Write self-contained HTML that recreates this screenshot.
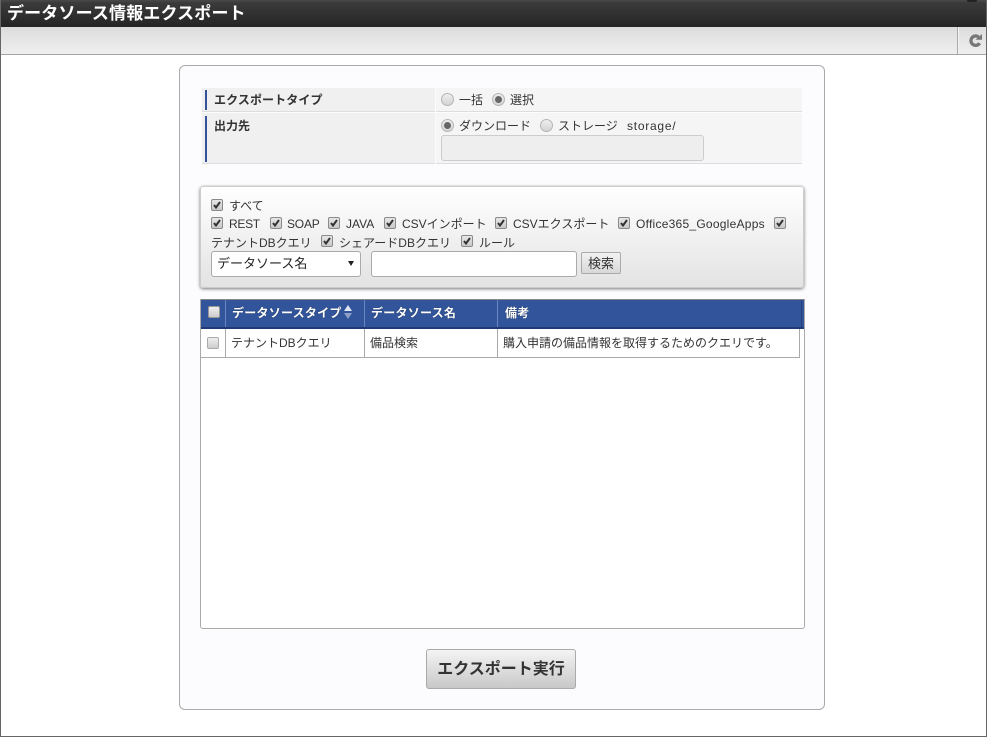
<!DOCTYPE html>
<html lang="ja"><head><meta charset="utf-8"><title>データソース情報エクスポート</title>
<style>
html,body{margin:0;padding:0;background:#fff}
body{width:987px;height:737px;position:relative;overflow:hidden;font-family:"Liberation Sans","Noto Sans CJK JP",sans-serif;font-size:13px;color:#333}
.a{position:absolute;box-sizing:border-box}
.t{position:absolute;white-space:nowrap;line-height:18px;height:18px}
.cb{position:absolute;width:12px;height:12px;box-sizing:border-box;border:1px solid #8a8a8a;border-radius:2px;background:linear-gradient(#e6e6e6,#c8c8c8)}
.cb svg{position:absolute;left:0;top:0}
.r{position:absolute;width:13px;height:13px;box-sizing:border-box;border:1px solid #b5b5b5;border-radius:50%;background:linear-gradient(#eee,#d4d4d4)}
.r.on:after{content:"";position:absolute;left:2px;top:2px;width:7px;height:7px;border-radius:50%;background:#666}
.th{color:#fff;font-weight:bold;text-shadow:0 0 1px #123;letter-spacing:.25px}
</style></head><body>
<div class="a" style="left:0;top:0;width:987px;height:27px;background:linear-gradient(#4a4a4a 0,#3a3a3a 3px,#252525 100%)"></div>
<div class="a" style="left:967px;top:0;width:10px;height:2px;background:#222;border-radius:0 0 5px 5px"></div>
<div class="t" style="left:7px;top:4px;font-size:17px;line-height:20px;height:20px;font-weight:bold;color:#fff;letter-spacing:.15px">データソース情報エクスポート</div>
<div class="a" style="left:0;top:27px;width:987px;height:28px;background:linear-gradient(#dcdcdc,#efefef);border-bottom:1px solid #a5a5a5"></div>
<div class="a" style="left:957px;top:27px;width:2px;height:27px;background:#aaa;border-right:1px solid #f4f4f4"></div>
<svg class="a" style="left:969px;top:34px" width="13" height="13" viewBox="0 0 13 13"><path d="M10.6 9.2A4.7 4.7 0 1 1 9.6 3" fill="none" stroke="#777" stroke-width="3.3"/><path d="M6.5 5.8H13V0z" fill="#777"/></svg>
<div class="a" style="left:0;top:0;width:987px;height:737px;border:1px solid #666;border-top:0;pointer-events:none"></div>

<div class="a" style="left:179px;top:65px;width:646px;height:645px;background:#fcfcfe;border:1px solid #aaa;border-radius:6px"></div>

<div class="a" style="left:202px;top:88px;width:233px;height:24px;background:#f0f0f0;border-bottom:1px solid #ddd"></div>
<div class="a" style="left:205px;top:90px;width:2px;height:20px;background:#34539a"></div>
<div class="a" style="left:436px;top:88px;width:366px;height:24px;background:#f5f5f5;border-bottom:1px solid #ddd"></div>
<div class="t" style="left:214px;top:91px;font-size:12px;font-weight:bold;letter-spacing:.1px">エクスポートタイプ</div>
<div class="r" style="left:441px;top:93px"></div><div class="t" style="left:459px;top:91px;font-size:12px">一括</div>
<div class="r on" style="left:492px;top:93px"></div><div class="t" style="left:510px;top:91px;font-size:12px">選択</div>

<div class="a" style="left:202px;top:113px;width:233px;height:51px;background:#f0f0f0;border-bottom:1px solid #ddd"></div>
<div class="a" style="left:205px;top:116px;width:2px;height:46px;background:#34539a"></div>
<div class="a" style="left:436px;top:113px;width:366px;height:51px;background:#f5f5f5;border-bottom:1px solid #ddd"></div>
<div class="t" style="left:214px;top:117px;font-size:12px;font-weight:bold">出力先</div>
<div class="r on" style="left:441px;top:119px"></div><div class="t" style="left:459px;top:117px;font-size:12px">ダウンロード</div>
<div class="r" style="left:540px;top:119px"></div><div class="t" style="left:558px;top:117px;font-size:12px">ストレージ</div>
<div class="t" style="left:627px;top:117px;font-size:12px;letter-spacing:.75px">storage/</div>
<div class="a" style="left:441px;top:135px;width:263px;height:26px;background:#eee;border:1px solid #ccc;border-radius:3px"></div>

<div class="a" style="left:200px;top:186px;width:604px;height:102px;background:linear-gradient(#fff,#e3e3e3);border:1px solid #ccc;border-radius:3px;box-shadow:0 1px 3px #777"></div>
<div class="cb" style="left:211px;top:199px"><svg width="10" height="10" viewBox="0 0 10 10"><path d="M2 5l2 2.5L8 2" fill="none" stroke="#333" stroke-width="2"/></svg></div><div class="t" style="left:229px;top:197px;font-size:12px">すべて</div>
<div class="cb" style="left:211px;top:217px"><svg width="10" height="10" viewBox="0 0 10 10"><path d="M2 5l2 2.5L8 2" fill="none" stroke="#333" stroke-width="2"/></svg></div><div class="t" style="left:229px;top:215px;font-size:12px;letter-spacing:-.3px">REST</div>
<div class="cb" style="left:270px;top:217px"><svg width="10" height="10" viewBox="0 0 10 10"><path d="M2 5l2 2.5L8 2" fill="none" stroke="#333" stroke-width="2"/></svg></div><div class="t" style="left:287px;top:215px;font-size:12px;letter-spacing:-.2px">SOAP</div>
<div class="cb" style="left:328px;top:217px"><svg width="10" height="10" viewBox="0 0 10 10"><path d="M2 5l2 2.5L8 2" fill="none" stroke="#333" stroke-width="2"/></svg></div><div class="t" style="left:346px;top:215px;font-size:12px">JAVA</div>
<div class="cb" style="left:384px;top:217px"><svg width="10" height="10" viewBox="0 0 10 10"><path d="M2 5l2 2.5L8 2" fill="none" stroke="#333" stroke-width="2"/></svg></div><div class="t" style="left:402px;top:215px;font-size:12px">CSVインポート</div>
<div class="cb" style="left:495px;top:217px"><svg width="10" height="10" viewBox="0 0 10 10"><path d="M2 5l2 2.5L8 2" fill="none" stroke="#333" stroke-width="2"/></svg></div><div class="t" style="left:513px;top:215px;font-size:12px">CSVエクスポート</div>
<div class="cb" style="left:618px;top:217px"><svg width="10" height="10" viewBox="0 0 10 10"><path d="M2 5l2 2.5L8 2" fill="none" stroke="#333" stroke-width="2"/></svg></div><div class="t" style="left:636px;top:215px;font-size:12px;letter-spacing:.25px">Office365_GoogleApps</div>
<div class="cb" style="left:774px;top:217px"><svg width="10" height="10" viewBox="0 0 10 10"><path d="M2 5l2 2.5L8 2" fill="none" stroke="#333" stroke-width="2"/></svg></div>
<div class="t" style="left:211px;top:234px;font-size:12px">テナントDBクエリ</div>
<div class="cb" style="left:321px;top:235px"><svg width="10" height="10" viewBox="0 0 10 10"><path d="M2 5l2 2.5L8 2" fill="none" stroke="#333" stroke-width="2"/></svg></div><div class="t" style="left:339px;top:234px;font-size:12px">シェアードDBクエリ</div>
<div class="cb" style="left:461px;top:235px"><svg width="10" height="10" viewBox="0 0 10 10"><path d="M2 5l2 2.5L8 2" fill="none" stroke="#333" stroke-width="2"/></svg></div><div class="t" style="left:479px;top:234px;font-size:12px">ルール</div>
<div class="a" style="left:211px;top:251px;width:150px;height:26px;background:#fff;border:1px solid #aaa;border-radius:3px"></div>
<div class="t" style="left:217px;top:255px;font-size:13px;color:#222">データソース名</div>
<div class="a" style="left:348px;top:261px;width:0;height:0;border:3px solid transparent;border-top:5px solid #222;border-bottom:0"></div>
<div class="a" style="left:371px;top:251px;width:206px;height:26px;background:#fff;border:1px solid #aaa;border-radius:3px"></div>
<div class="a" style="left:581px;top:252px;width:40px;height:22px;background:linear-gradient(#f2f2f2,#d8d8d8);border:1px solid #aaa;border-radius:2px;text-align:center;font-size:13px;line-height:21px">検索</div>

<div class="a" style="left:200px;top:299px;width:605px;height:330px;background:#fff;border:1px solid #aaa;border-radius:0 0 3px 3px"></div>
<div class="a" style="left:201px;top:299px;width:603px;height:30px;background:#32549b;border-top:1px solid #888;border-bottom:2px solid #1f3a75"></div>
<div class="a" style="left:225px;top:300px;width:1px;height:27px;background:#6a86c0"></div>
<div class="a" style="left:364px;top:300px;width:1px;height:27px;background:#6a86c0"></div>
<div class="a" style="left:497px;top:300px;width:1px;height:27px;background:#6a86c0"></div>
<div class="a" style="left:801px;top:300px;width:1px;height:27px;background:#223f7c"></div>
<div class="a" style="left:208px;top:306px;width:12px;height:12px;background:linear-gradient(#eee,#ccc);border:1px solid #999;border-radius:2px"></div>
<div class="t th" style="left:232px;top:304px;font-size:12px">データソースタイプ</div>
<div class="a" style="left:344px;top:305px;width:0;height:0;border:4px solid transparent;border-bottom:6px solid #dfe5f2;border-top:0"></div>
<div class="a" style="left:344px;top:313px;width:0;height:0;border:4px solid transparent;border-top:6px solid #8ea0c8;border-bottom:0"></div>
<div class="t th" style="left:371px;top:304px;font-size:12px">データソース名</div>
<div class="t th" style="left:505px;top:304px;font-size:12px">備考</div>

<div class="a" style="left:201px;top:329px;width:599px;height:29px;border-bottom:1px solid #aaa;border-right:1px solid #aaa"></div>
<div class="a" style="left:225px;top:329px;width:1px;height:28px;background:#aaa"></div>
<div class="a" style="left:364px;top:329px;width:1px;height:28px;background:#aaa"></div>
<div class="a" style="left:497px;top:329px;width:1px;height:28px;background:#aaa"></div>
<div class="a" style="left:207px;top:337px;width:12px;height:12px;background:linear-gradient(#eee,#ccc);border:1px solid #aaa;border-radius:2px"></div>
<div class="t" style="left:231px;top:334px;font-size:12px">テナントDBクエリ</div>
<div class="t" style="left:370px;top:334px;font-size:12px">備品検索</div>
<div class="t" style="left:503px;top:334px;font-size:12px">購入申請の備品情報を取得するためのクエリです。</div>

<div class="a" style="left:426px;top:649px;width:150px;height:40px;background:linear-gradient(#f4f4f4,#c8c8c8);border:1px solid #aaa;border-radius:3px;text-align:center;font-size:16px;font-weight:bold;line-height:39px;color:#333">エクスポート実行</div>
</body></html>
